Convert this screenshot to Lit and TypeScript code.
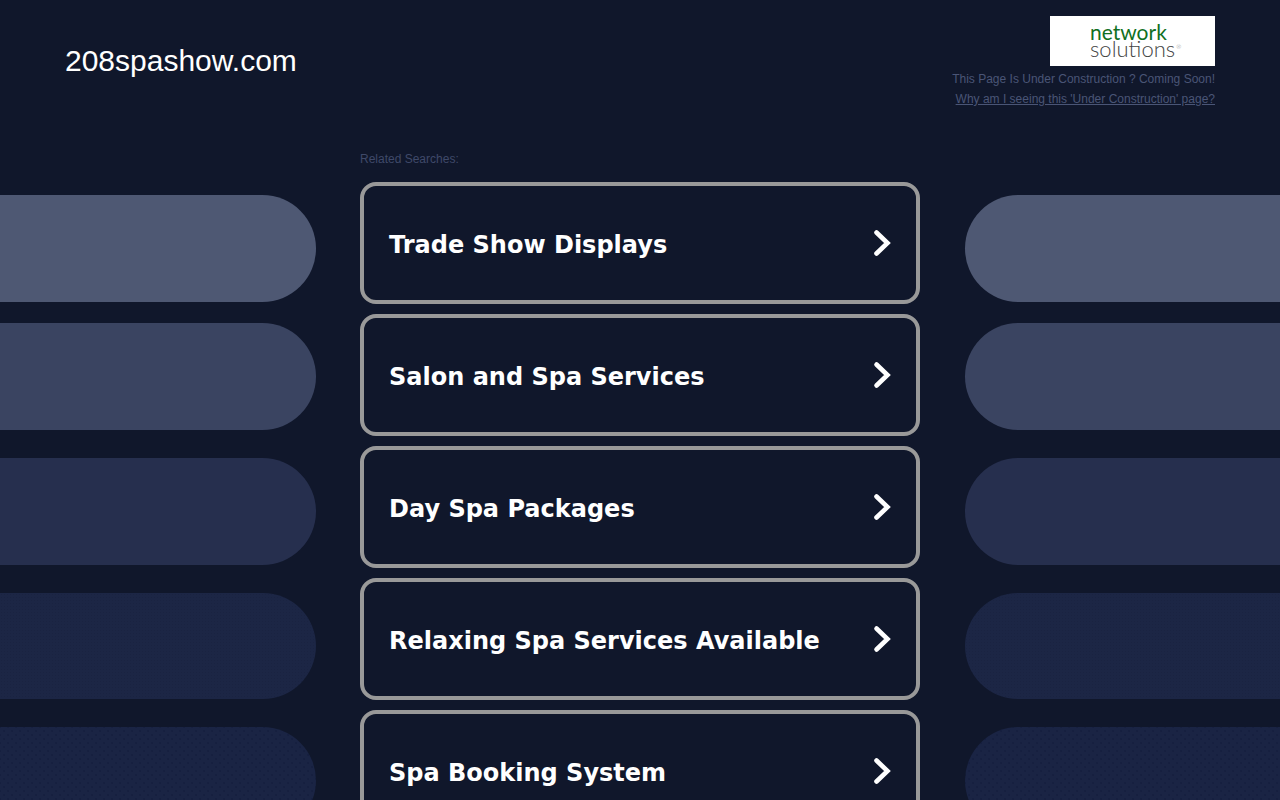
import { LitElement, html, css } from "lit";
import { customElement } from "lit/decorators.js";

const ITEMS = [
  "Trade Show Displays",
  "Salon and Spa Services",
  "Day Spa Packages",
  "Relaxing Spa Services Available",
  "Spa Booking System",
];
const PILLS = ["p1", "p2", "p3", "p4", "p5"];

@customElement("app-root")
export class AppRoot extends LitElement {
  static styles = css`
    :host {
      display: block;
      width: 1280px;
      height: 800px;
      overflow: hidden;
      background: #10172b;
      font-family: "Liberation Sans", Arial, sans-serif;
    }
    .header {
      display: flex;
      justify-content: space-between;
      align-items: flex-start;
      height: 152px;
      padding: 16px 65px 0;
      box-sizing: border-box;
    }
    .title {
      margin-top: 26px;
      font-size: 30px;
      line-height: 38px;
      color: #fff;
    }
    .info {
      display: flex;
      flex-direction: column;
      align-items: flex-end;
    }
    .logo {
      width: 165px;
      height: 50px;
      background: #fff;
      display: flex;
      flex-direction: column;
      padding: 7px 0 0 40px;
      box-sizing: border-box;
      font-family: "Lato", sans-serif;
      line-height: 17px;
    }
    .logo .a { color: #11701f; font-size: 21px; font-weight: 400; }
    .logo .b { color: #444; font-size: 22px; font-weight: 300; }
    .logo sup { font-size: 6px; line-height: 0; color: #777; vertical-align: 8px; margin-left: 1px; }
    .line {
      font-size: 12px;
      line-height: 20px;
      color: #4a5576;
    }
    .line.first { margin-top: 3px; }
    a.line { text-decoration: underline; }
    .main {
      display: grid;
      grid-template-columns: 316px 560px 1fr;
      column-gap: 44px;
    }
    .side {
      display: flex;
      flex-direction: column;
      padding-top: 43px;
    }
    .pill { height: 107px; flex: none; }
    .left .pill { border-radius: 0 54px 54px 0; }
    .right .pill { border-radius: 54px 0 0 54px; }
    .right { margin-left: 1px; }
    .p1 { background: #4e5873; }
    .p2 { margin-top: 21px; background: #3a4461; }
    .p3 { margin-top: 28px; background: #262f4e; }
    .p4 {
      margin-top: 28px;
      height: 106px;
      background-color: #1c2645;
      background-image: radial-gradient(#1a2341 0.5px, transparent 0.8px);
      background-size: 3px 3px;
    }
    .p5 {
      margin-top: 28px;
      background-color: #1a2444;
      background-image:
        radial-gradient(#162040 0.7px, transparent 0.9px),
        radial-gradient(#162040 0.7px, transparent 0.9px);
      background-size: 8px 8px;
      background-position: 0 0, 4px 4px;
    }
    .label {
      font-size: 12px;
      line-height: 14px;
      color: #3f4969;
      margin-bottom: 16px;
    }
    .cards { display: flex; flex-direction: column; gap: 10px; }
    .card {
      display: flex;
      align-items: center;
      justify-content: space-between;
      height: 122px;
      box-sizing: border-box;
      border: 4px solid #999;
      border-radius: 16px;
      padding: 0 25px;
      color: #fff;
      font-family: "DejaVu Sans", Verdana, sans-serif;
      font-weight: 700;
      font-size: 24px;
      flex: none;
    }
    .card span { position: relative; top: 2px; }
    .card svg { width: 20px; height: 28px; }
  `;

  render() {
    return html`
      <div class="header">
        <div class="title">208spashow.com</div>
        <div class="info">
          <div class="logo">
            <div class="a">network</div>
            <div class="b">solutions<sup>®</sup></div>
          </div>
          <div class="line first">This Page Is Under Construction ? Coming Soon!</div>
          <a class="line">Why am I seeing this 'Under Construction' page?</a>
        </div>
      </div>
      <div class="main">
        <div class="side left">${PILLS.map((p) => html`<div class="pill ${p}"></div>`)}</div>
        <div class="center">
          <div class="label">Related Searches:</div>
          <div class="cards">
            ${ITEMS.map(
              (t) => html`<div class="card">
                <span>${t}</span>
                <svg viewBox="0 0 20 28" fill="none" stroke="#fff" stroke-width="4.6" stroke-linecap="round" stroke-linejoin="miter">
                  <path d="M5.5 3.5 L16.5 14 L5.5 24.5" />
                </svg>
              </div>`
            )}
          </div>
        </div>
        <div class="side right">${PILLS.map((p) => html`<div class="pill ${p}"></div>`)}</div>
      </div>
    `;
  }
}
